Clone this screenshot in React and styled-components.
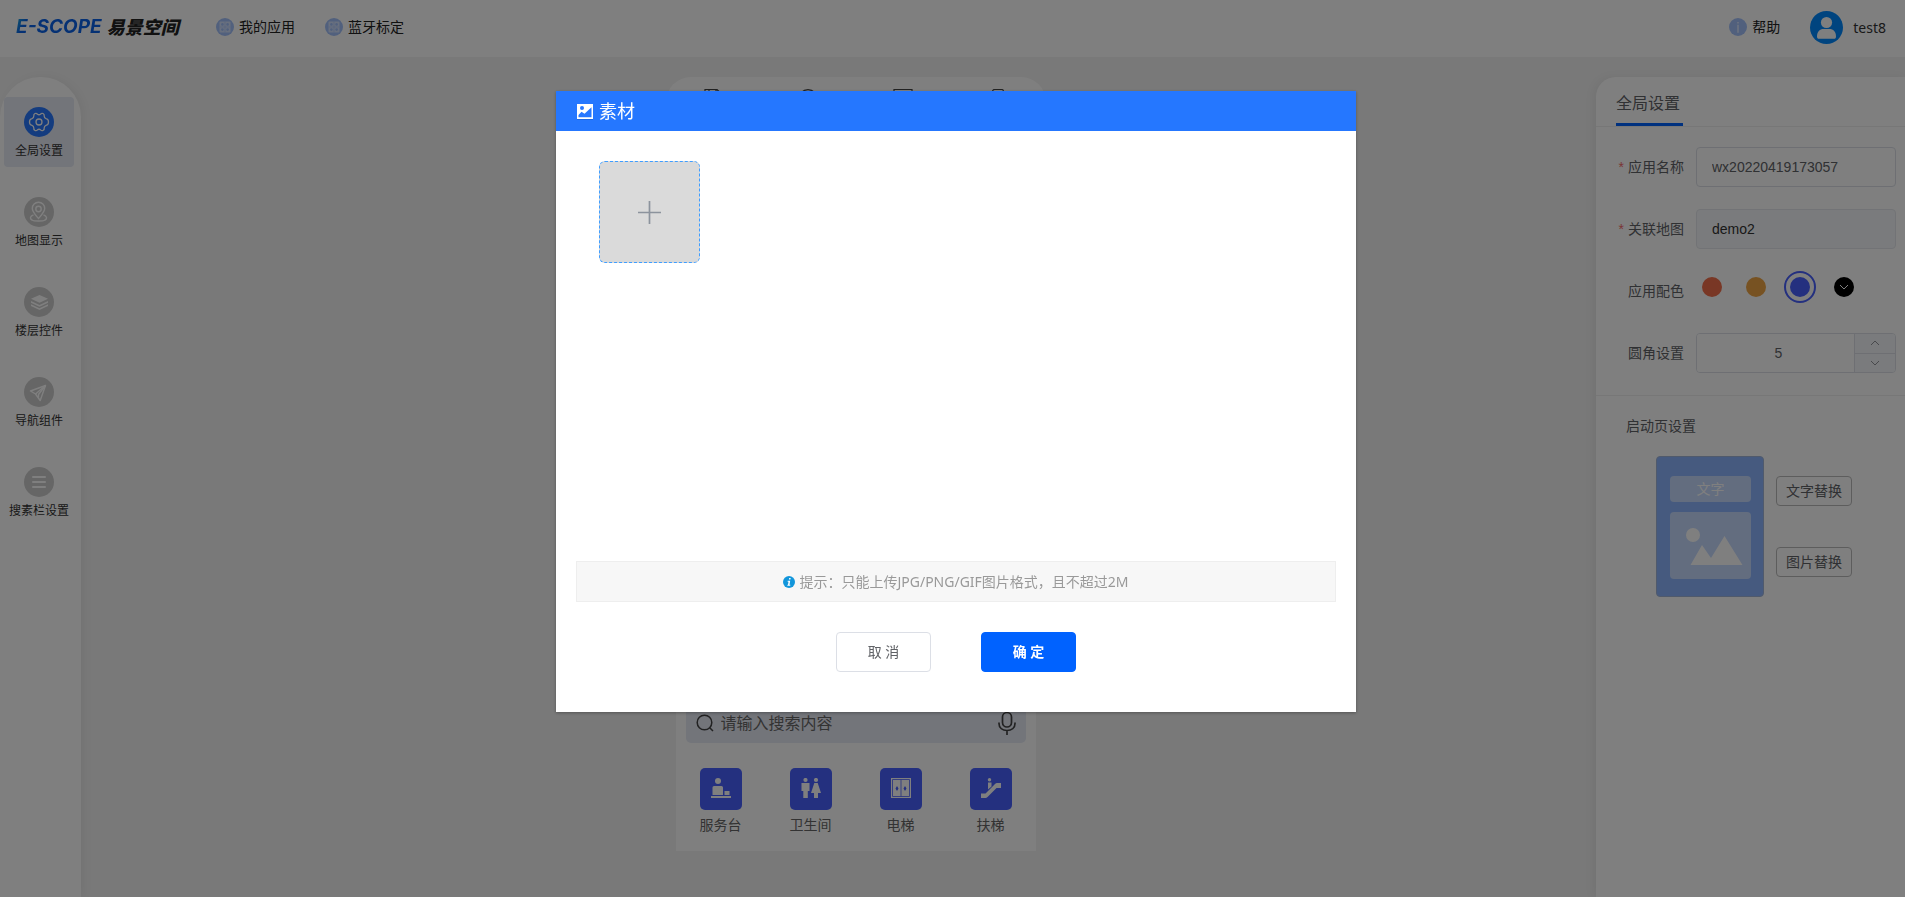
import React from "react";
import styled, { createGlobalStyle } from "styled-components";

const App = () => {
  return (
    <>
      <GlobalStyle />
      <Page>
        <Header />
        <Workspace>
          <Sidebar />
          <Preview />
          <Settings />
        </Workspace>
      </Page>
      <MaterialDialog />
    </>
  );
};

export default App;

const Header = () => (
  <TopBar>
    <Brand href="#home" aria-label="E-SCOPE 易景空间">
      <BrandLatin>E-SCOPE</BrandLatin>
      <BrandName>易景空间</BrandName>
    </Brand>
    <TopNav>
      <TopLink href="#apps">
        <GridIcon />
        我的应用
      </TopLink>
      <TopLink href="#bluetooth">
        <GridIcon />
        蓝牙标定
      </TopLink>
    </TopNav>
    <Account>
      <TopLink href="#help">
        <HelpIcon />
        帮助
      </TopLink>
      <UserButton type="button">
        <Avatar />
        test8
      </UserButton>
    </Account>
  </TopBar>
);

const GridIcon = () => (
  <svg width="18" height="18" viewBox="0 0 18 18" aria-hidden="true">
    <circle cx="9" cy="9" r="9" fill="#a3c1fb" />
    <rect x="3.5" y="3.5" width="11" height="11" rx="1" fill="#d3e1fd" />
    <g fill="#a3c1fb">
      <circle cx="6.4" cy="6.4" r="1.3" />
      <circle cx="11.6" cy="6.4" r="1.3" />
      <circle cx="6.4" cy="11.6" r="1.3" />
      <circle cx="11.6" cy="11.6" r="1.3" />
      <path d="M8.7 3.5h.6v11h-.6zM3.5 8.7h11v.6h-11z" />
    </g>
  </svg>
);

const HelpIcon = () => (
  <svg width="18" height="18" viewBox="0 0 18 18" aria-hidden="true">
    <circle cx="9" cy="9" r="9" fill="#a3c1fb" />
    <path d="M8.3 4h1.4v1.5H8.3zM8.3 6.7h1.4v8H8.3z" fill="#e2ecff" />
  </svg>
);

const Avatar = () => (
  <svg width="33" height="33" viewBox="0 0 33 33" aria-hidden="true">
    <circle cx="16.5" cy="16.5" r="16.5" fill="#0089ff" />
    <circle cx="16.5" cy="11.5" r="5.6" fill="#fff" />
    <path
      d="M7 25.5c0-5 2.8-7.5 6.5-7.5h6c3.7 0 6.5 2.500 6.500 7.500 0 1.600-.7 2.300-2 2.300H9c-1.300 0-2-.7-2-2.300z"
      fill="#fff"
    />
  </svg>
);

const sideItems = [
  {
    label: "全局设置",
    active: true,
    icon: (
      <g fill="none" stroke="#fff" strokeWidth="1.3" strokeLinejoin="round">
        <path d="M11 6.500Q12.500 6 13.500 7.200 15 8.300 16.500 7.200 17.500 6 19 6.500 20.500 7.200 20.200 9 20.200 11 22 11.600 24.500 12 24.500 15 24.500 18 22 18.400 20.200 19 20.200 21 20.500 22.800 19 23.500 17.500 24 16.500 22.800 15 21.700 13.500 22.800 12.500 24 11 23.500 9.500 22.800 9.800 21 9.800 19 8 18.400 5.500 18 5.500 15 5.500 12 8 11.600 9.800 11 9.800 9 9.500 7.200 11 6.500z" />
        <circle cx="15" cy="15" r="3" />
      </g>
    ),
  },
  {
    label: "地图显示",
    icon: (
      <g fill="none" stroke="#fff" strokeWidth="1.4">
        <path d="M14.500 21.500C12 18.500 8.300 14.800 8.300 11.500a6.200 6.200 0 0 1 12.400 0c0 3.300-3.700 7-6.200 10z" />
        <circle cx="14.5" cy="12" r="2.7" />
        <path d="M9.500 17.800c-3.500 1.200-4 4-1.500 5.200 2 1.400 11 1.400 13 0 2.500-1.200 2-4-1.500-5.200" />
      </g>
    ),
  },
  {
    label: "楼层控件",
    icon: (
      <g fill="#fff">
        <path d="M15.500 8l8.500 3.800-8.500 4-8.500-4z" />
        <path d="M7 14l8.500 4 8.500-4v1.700l-8.500 4-8.500-4zM7 17.300l8.500 4 8.500-4V19l-8.500 4L7 19z" />
      </g>
    ),
  },
  {
    label: "导航组件",
    icon: (
      <g fill="none" stroke="#fff" strokeWidth="1.4" strokeLinejoin="round">
        <path d="M21.500 8.500L6.500 14l5 3 4.700 6.500z" />
        <path d="M21.500 8.500l-10 8.500" />
        <path d="M21.500 8.500L14.500 17.500v3" />
      </g>
    ),
  },
  {
    label: "搜素栏设置",
    icon: (
      <path
        d="M9 10h12M9 15h12M9 20h12"
        stroke="#fff"
        strokeWidth="2"
        strokeLinecap="round"
      />
    ),
  },
];

const Sidebar = () => (
  <SideNav>
    {sideItems.map(({ label, active, icon }) => (
      <SideItem key={label} type="button" $active={active}>
        <svg width="30" height="30" viewBox="0 0 30 30" aria-hidden="true">
          <circle cx="15" cy="15" r="15" fill={active ? "#2878ff" : "#cdcdcd"} />
          {icon}
        </svg>
        {label}
      </SideItem>
    ))}
  </SideNav>
);

const facilities = [
  {
    label: "服务台",
    icon: (
      <>
        <circle cx="7" cy="3" r="3" />
        <path d="M1.500 17V9.500Q1.500 8 3 8h7.500Q12 8 12 9.500V17zM13.500 13h5v4h-5zM0 18h20v2H0z" />
      </>
    ),
  },
  {
    label: "卫生间",
    icon: (
      <>
        <circle cx="4.5" cy="2" r="2.1" />
        <circle cx="15" cy="2" r="2.1" />
        <path d="M.5 5h8v8H6.800v7H2.300v-7H.5zM13.300 5h3.400L20 15h-3v5h-4v-5h-3z" />
      </>
    ),
  },
  {
    label: "电梯",
    icon: (
      <>
        <path d="M0 0h20v20H0z" />
        <path
          d="M1.500 1.500h17v17h-17zM10 1.500v17"
          fill="none"
          stroke="#4961ff"
          strokeWidth="0.8"
        />
        <path d="M6 8l1.500 2.500L6 13l-1.500-2.500zM14 8l1.500 2.500L14 13l-1.500-2.500z" fill="#4961ff" />
      </>
    ),
  },
  {
    label: "扶梯",
    icon: (
      <>
        <circle cx="8.5" cy="1.7" r="1.7" />
        <path d="M7 4.500h3.500v4L7 11.500z" />
        <path d="M0 15.500h4.500L14 6q1-1 2-1h4v5h-4.500l-9 9q-1 1-2 1H0z" />
      </>
    ),
  },
];

const Preview = () => (
  <PreviewArea>
    <PreviewTools>
      <FileIcon />
      <EyeIcon />
      <ScreenIcon />
      <PhoneIcon />
    </PreviewTools>
    <Phone>
      <SearchBar>
        <svg width="18" height="18" viewBox="0 0 18 18" aria-hidden="true">
          <circle cx="8.5" cy="8.5" r="7.3" fill="none" stroke="#444" strokeWidth="1.5" />
          <path d="M13.500 13.500l3.500 3.500" stroke="#444" strokeWidth="1.5" />
        </svg>
        <SearchInput aria-label="搜索" placeholder="请输入搜索内容" />
        <svg width="18" height="24" viewBox="0 0 18 24" aria-hidden="true">
          <g fill="none" stroke="#444" strokeWidth="1.7">
            <rect x="4.5" y="1.5" width="9" height="14.5" rx="4.5" />
            <path d="M1 11.500v1c0 4.500 3.500 7 8 7s8-2.500 8-7v-1M9 19.500V24" />
          </g>
        </svg>
      </SearchBar>
      <Facilities>
        {facilities.map(({ label, icon }) => (
          <Facility key={label} type="button">
            <FacilityIcon>
              <svg width="20" height="20" viewBox="0 0 20 20" fill="#fff" aria-hidden="true">
                {icon}
              </svg>
            </FacilityIcon>
            {label}
          </Facility>
        ))}
      </Facilities>
    </Phone>
  </PreviewArea>
);

const FileIcon = () => (
  <svg width="20" height="20" viewBox="0 0 20 20" aria-hidden="true">
    <path d="M2 .5h12l3 3v15H2zM6 .5v5h7v-5" fill="none" stroke="#444" strokeWidth="1.2" />
  </svg>
);

const EyeIcon = () => (
  <svg width="20" height="20" viewBox="0 0 20 20" aria-hidden="true">
    <circle cx="10" cy="10" r="9.3" fill="none" stroke="#444" strokeWidth="1.3" />
    <circle cx="10" cy="10" r="3" fill="#444" />
  </svg>
);

const ScreenIcon = () => (
  <svg width="20" height="20" viewBox="0 0 20 20" aria-hidden="true">
    <path d="M1 .5h18V14H1zM6 19h8" fill="none" stroke="#444" strokeWidth="1.2" />
  </svg>
);

const PhoneIcon = () => (
  <svg width="20" height="20" viewBox="0 0 20 20" aria-hidden="true">
    <rect x="4.500" y=".5" width="11" height="18" rx="2" fill="none" stroke="#444" strokeWidth="1.2" />
  </svg>
);

const Settings = () => (
  <SettingsPanel>
    <Tabs>
      <Tab type="button">全局设置</Tab>
    </Tabs>
    <Form>
      <FormRow>
        <Label htmlFor="app-name" $required>
          应用名称
        </Label>
        <TextInput id="app-name" defaultValue="wx20220419173057" />
      </FormRow>
      <FormRow>
        <Label htmlFor="app-map" $required>
          关联地图
        </Label>
        <TextInput id="app-map" value="demo2" disabled readOnly />
      </FormRow>
      <FormRow>
        <Label as="span">应用配色</Label>
        <Swatches>
          <Swatch type="button" aria-label="橙红" $color="#f26e4a" />
          <Swatch type="button" aria-label="橙黄" $color="#efa544" />
          <Swatch type="button" aria-label="蓝色" $color="#4961ff" $selected />
          <Swatch type="button" aria-label="更多颜色" $color="#000">
            <Chevron color="#fff" />
          </Swatch>
        </Swatches>
      </FormRow>
      <FormRow>
        <Label htmlFor="app-radius">圆角设置</Label>
        <Stepper>
          <StepperInput id="app-radius" defaultValue="5" />
          <StepperButtons>
            <StepButton type="button" aria-label="增加">
              <Chevron up color="#909399" />
            </StepButton>
            <StepButton type="button" aria-label="减少">
              <Chevron color="#909399" />
            </StepButton>
          </StepperButtons>
        </Stepper>
      </FormRow>
    </Form>
    <LaunchSection>
      <LaunchTitle>启动页设置</LaunchTitle>
      <LaunchBody>
        <LaunchCard>
          <LaunchText>文字</LaunchText>
          <LaunchPicture>
            <svg width="57" height="38" viewBox="0 0 57 38" aria-hidden="true">
              <circle cx="7" cy="7" r="7" fill="#fff" />
              <path d="M4.500 37L16 17l9 13L38.500 8 56.500 37z" fill="#fff" />
            </svg>
          </LaunchPicture>
        </LaunchCard>
        <LaunchButtons>
          <ReplaceButton type="button">文字替换</ReplaceButton>
          <ReplaceButton type="button">图片替换</ReplaceButton>
        </LaunchButtons>
      </LaunchBody>
    </LaunchSection>
  </SettingsPanel>
);

const Chevron = ({ up, color }) => (
  <svg width="10" height="6" viewBox="0 0 10 6" aria-hidden="true">
    <path d={up ? "M1 5l4-4 4 4" : "M1 1l4 4 4-4"} fill="none" stroke={color} />
  </svg>
);

const MaterialDialog = () => (
  <Overlay>
    <Dialog role="dialog" aria-modal="true" aria-labelledby="dialog-title">
      <DialogHeader>
        <svg width="16" height="17" viewBox="0 0 16 17" aria-hidden="true">
          <path d="M0 2h16v15H0z" fill="#1c5fd0" opacity="0.6" />
          <path d="M0 1h16v15H0z" fill="#fff" />
          <circle cx="5" cy="5" r="2" fill="#2878ff" />
          <path d="M1.500 14.300V12L4.500 8.800l3 2L14.500 4.300v10z" fill="#2878ff" />
        </svg>
        <DialogTitle id="dialog-title">素材</DialogTitle>
      </DialogHeader>
      <DialogBody>
        <UploadButton type="button" aria-label="上传素材">
          <svg width="23" height="23" viewBox="0 0 23 23" aria-hidden="true">
            <path d="M11.500 0v23M0 11.500h23" stroke="#8c939d" strokeWidth="1.7" />
          </svg>
        </UploadButton>
      </DialogBody>
      <Tip>
        <svg width="12" height="12" viewBox="0 0 12 12" aria-hidden="true">
          <circle cx="6" cy="6" r="6" fill="#1296db" />
          <path
            d="M6.200 2h1.500l-.3 1.500H5.900zM4.700 4.700h2.500L6.500 8.700h.9l-.2 1H4.300l.2-1h.5l.5-3h-.9z"
            fill="#fff"
          />
        </svg>
        提示：只能上传JPG/PNG/GIF图片格式，且不超过2M
      </Tip>
      <DialogFooter>
        <DialogButton type="button">取 消</DialogButton>
        <DialogButton type="button" $primary>
          确 定
        </DialogButton>
      </DialogFooter>
    </Dialog>
  </Overlay>
);

const GlobalStyle = createGlobalStyle`
  * {
    box-sizing: border-box;
  }

  body {
    margin: 0;
    background-color: #f2f2f2;
    color: #333;
    font-family: "Noto Sans", "Noto Sans CJK SC", sans-serif;
    font-size: 14px;
  }

  button,
  input {
    font-family: inherit;
    font-size: 14px;
    color: inherit;
    margin: 0;
  }

  button {
    border: none;
    padding: 0;
    background: none;
    cursor: pointer;
  }

  svg {
    display: block;
    flex-shrink: 0;
  }
`;

const Page = styled.div`
  display: flex;
  flex-direction: column;
  height: 100vh;
  overflow: hidden;
`;

const TopBar = styled.header`
  display: flex;
  align-items: center;
  height: 57px;
  padding: 0 19px 3px 16px;
  background-color: #fff;
  flex-shrink: 0;
`;

const Brand = styled.a`
  display: flex;
  align-items: center;
  gap: 5px;
  width: 160px;
  font-style: italic;
  line-height: 24px;
  text-decoration: none;
  white-space: nowrap;
`;

const BrandLatin = styled.span`
  font-family: Inter, sans-serif;
  font-size: 19px;
  font-weight: 700;
  background: linear-gradient(120deg, #22b8d8, #0a62e8 12px);
  background-clip: text;
  color: transparent;
`;

const BrandName = styled.span`
  font-size: 18px;
  font-weight: 900;
  color: #222;
`;

const TopNav = styled.nav`
  display: flex;
  gap: 30px;
  padding-left: 40px;
`;

const TopLink = styled.a`
  display: flex;
  align-items: center;
  gap: 5px;
  color: #222;
  line-height: 20px;
  text-decoration: none;
`;

const Account = styled.div`
  display: flex;
  align-items: center;
  gap: 30px;
  margin-left: auto;
`;

const UserButton = styled.button`
  display: flex;
  align-items: center;
  gap: 10px;
`;

const Workspace = styled.div`
  display: flex;
  flex: 1;
  min-height: 0;
  padding-top: 20px;
`;

const SideNav = styled.nav`
  display: flex;
  flex-direction: column;
  gap: 20px;
  width: 81px;
  padding: 20px 7px 0 4px;
  border-radius: 40px 40px 0 0;
  background-color: #fff;
  box-shadow: 3px 0 10px rgba(0, 0, 0, 0.05);
`;

const SideItem = styled.button`
  display: flex;
  flex-direction: column;
  align-items: center;
  gap: 5px;
  height: 70px;
  padding-top: 10px;
  border-radius: 4px;
  background-color: ${(props) => (props.$active ? "#e6eaf5" : "transparent")};
  font-size: 12px;
  line-height: 18px;
  white-space: nowrap;
`;

const PreviewArea = styled.main`
  display: flex;
  flex: 1;
  flex-direction: column;
  align-items: center;
  padding-left: 34px;
`;

const PreviewTools = styled.div`
  display: flex;
  justify-content: space-around;
  width: 380px;
  height: 50px;
  padding-top: 12px;
  border-radius: 28px;
  background-color: #fff;
`;

const Phone = styled.section`
  display: flex;
  flex-direction: column;
  justify-content: flex-end;
  width: 360px;
  height: 704px;
  margin-top: 20px;
  padding: 0 10px 16px;
  background-color: #fff;
`;

const SearchBar = styled.div`
  display: flex;
  align-items: center;
  height: 40px;
  padding: 0 10px;
  border-radius: 5px;
  background-color: #e6eaf5;
`;

const SearchInput = styled.input`
  flex: 1;
  min-width: 0;
  padding: 0 7px;
  border: none;
  background: none;
  font-size: 16px;
  line-height: 24px;

  &::placeholder {
    color: #666;
  }
`;

const Facilities = styled.div`
  display: grid;
  grid-template-columns: repeat(4, 1fr);
  margin: 25px -10px 0;
`;

const Facility = styled.button`
  display: flex;
  flex-direction: column;
  align-items: center;
  gap: 5px;
  color: #666;
  line-height: 20px;
`;

const FacilityIcon = styled.span`
  display: flex;
  align-items: center;
  justify-content: center;
  width: 42px;
  height: 42px;
  padding-bottom: 2px;
  border-radius: 5px;
  background-color: #4961ff;
`;

const SettingsPanel = styled.aside`
  width: 309px;
  border-radius: 20px 0 0 0;
  background-color: #fff;
  box-shadow: -3px 0 10px rgba(0, 0, 0, 0.05);
  color: #606266;
`;

const Tabs = styled.div`
  height: 50px;
  padding-left: 20px;
  border-bottom: 1px solid #eee;
`;

const Tab = styled.button`
  width: 67px;
  height: 49px;
  padding-top: 5px;
  border-bottom: 3px solid #0062ff;
  font-size: 16px;
  line-height: 24px;
  text-align: left;
  white-space: nowrap;
`;

const Form = styled.div`
  display: flex;
  flex-direction: column;
  gap: 22px;
  padding: 20px 9px 22px 0;
  border-bottom: 1px solid #eee;
`;

const FormRow = styled.div`
  display: flex;
  align-items: center;
  height: 40px;
`;

const Label = styled.label`
  width: 100px;
  padding-right: 12px;
  text-align: right;
  line-height: 20px;
  flex-shrink: 0;

  &:before {
    content: "${(props) => (props.$required ? "*" : "")}";
    margin-right: 4px;
    color: #f56c6c;
    font-family: "Liberation Sans", sans-serif;
  }
`;

const TextInput = styled.input`
  flex: 1;
  min-width: 0;
  height: 40px;
  padding: 0 15px;
  border: 1px solid #dcdfe6;
  border-radius: 4px;
  background-color: #fff;
  font-family: "Liberation Sans", sans-serif;

  &:disabled {
    background-color: #f5f7fa;
    border-color: #e4e7ed;
    color: #333;
  }
`;

const Swatches = styled.div`
  display: flex;
  align-items: center;
  gap: 12px;
  padding-bottom: 8px;
`;

const Swatch = styled.button`
  display: flex;
  align-items: center;
  justify-content: center;
  width: 32px;
  height: 32px;
  border: 2px solid ${(props) => (props.$selected ? props.$color : "transparent")};
  border-radius: 50%;
  padding: 4px;
  background-color: ${(props) => props.$color};
  background-clip: content-box;
`;

const Stepper = styled.div`
  display: flex;
  flex: 1;
  min-width: 0;
  height: 40px;
  border: 1px solid #dcdfe6;
  border-radius: 4px;
  overflow: hidden;
`;

const StepperInput = styled.input`
  flex: 1;
  min-width: 0;
  border: none;
  padding: 0 0 0 6px;
  text-align: center;
  font-family: "Liberation Sans", sans-serif;
`;

const StepperButtons = styled.div`
  display: flex;
  flex-direction: column;
  width: 41px;
  border-left: 1px solid #dcdfe6;
  background-color: #f5f7fa;
`;

const StepButton = styled.button`
  display: flex;
  flex: 1;
  align-items: center;
  justify-content: center;

  & + & {
    border-top: 1px solid #dcdfe6;
  }
`;

const LaunchSection = styled.section`
  padding: 20px 30px;
`;

const LaunchTitle = styled.h2`
  margin: 0;
  font-size: 14px;
  font-weight: normal;
  line-height: 20px;
`;

const LaunchBody = styled.div`
  display: flex;
  gap: 12px;
  padding: 20px 0 0 30px;
`;

const LaunchCard = styled.div`
  display: flex;
  flex-direction: column;
  gap: 10px;
  width: 108px;
  height: 141px;
  padding: 19px 12px 0 13px;
  border: 1px solid #a0b4d8;
  border-radius: 4px;
  background-color: #8db5ff;
`;

const LaunchText = styled.span`
  height: 26px;
  border-radius: 4px;
  background-color: #c6daff;
  color: #fff;
  line-height: 25px;
  text-align: center;
`;

const LaunchPicture = styled.div`
  display: flex;
  align-items: center;
  justify-content: center;
  height: 67px;
  padding: 3px 0 0 7px;
  border-radius: 4px;
  background-color: #c6daff;
`;

const LaunchButtons = styled.div`
  display: flex;
  flex-direction: column;
  gap: 41px;
  padding-top: 20px;
`;

const ReplaceButton = styled.button`
  width: 76px;
  height: 30px;
  border: 1px solid #bbb;
  border-radius: 4px;
  line-height: 20px;
`;

const Overlay = styled.div`
  position: fixed;
  inset: 0;
  display: flex;
  align-items: flex-start;
  justify-content: center;
  padding: 91px 0 0 7px;
  background-color: rgba(0, 0, 0, 0.5);
`;

const Dialog = styled.div`
  display: flex;
  flex-direction: column;
  width: 800px;
  padding-bottom: 40px;
  background-color: #fff;
  box-shadow: 0 1px 3px rgba(0, 0, 0, 0.3);
`;

const DialogHeader = styled.div`
  display: flex;
  align-items: center;
  gap: 6px;
  height: 40px;
  padding-left: 21px;
  background-color: #2577ff;
`;

const DialogTitle = styled.h1`
  margin: 0;
  font-size: 18px;
  font-weight: normal;
  line-height: 24px;
  color: #fff;
`;

const DialogBody = styled.div`
  height: 430px;
  padding: 30px 43px;
`;

const UploadButton = styled.button`
  display: flex;
  align-items: center;
  justify-content: center;
  width: 101px;
  height: 102px;
  border: 1px dashed #409eff;
  border-radius: 6px;
  background-color: #dadada;
`;

const Tip = styled.p`
  display: flex;
  align-items: center;
  justify-content: center;
  gap: 4px;
  height: 41px;
  margin: 0 20px 30px;
  border: 1px solid #eee;
  background-color: #f7f7f7;
  color: #999;
  line-height: 20px;
`;

const DialogFooter = styled.div`
  display: flex;
  justify-content: center;
  gap: 50px;
`;

const DialogButton = styled.button`
  width: 95px;
  height: 40px;
  border: 1px solid ${(props) => (props.$primary ? "#0062ff" : "#dcdfe6")};
  border-radius: 4px;
  background-color: ${(props) => (props.$primary ? "#0062ff" : "#fff")};
  color: ${(props) => (props.$primary ? "#fff" : "#606266")};
  font-weight: ${(props) => (props.$primary ? "bold" : "normal")};
  line-height: 20px;
`;
